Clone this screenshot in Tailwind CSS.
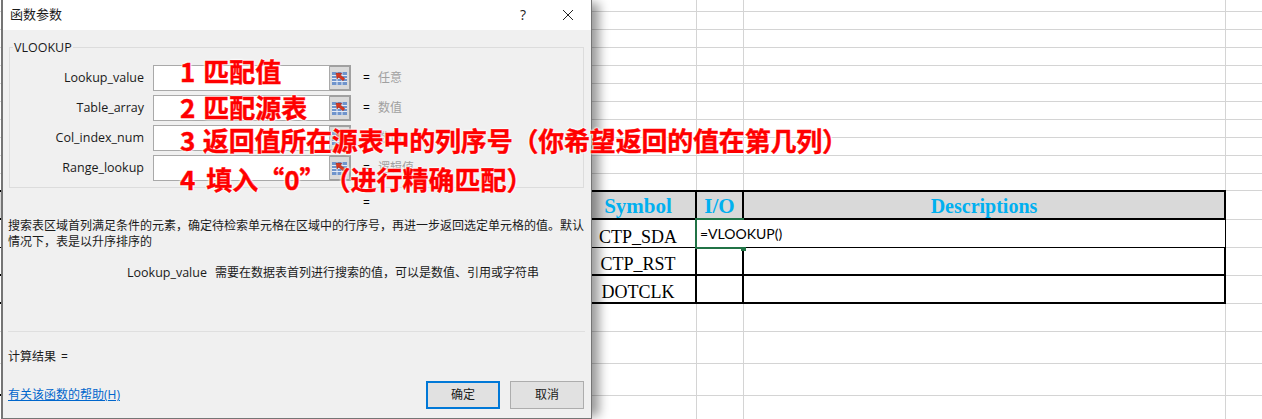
<!DOCTYPE html>
<html lang="zh-CN">
<head>
  <meta charset="UTF-8">
  <title>函数参数</title>
  <script src="https://cdn.jsdelivr.net/npm/@tailwindcss/browser@4"></script>
</head>
<body class="bg-white overflow-hidden">
  <div class="relative w-[1262px] h-[419px] overflow-hidden bg-white">

    <!-- sheet -->
    <div class="flex flex-col">
      <div class="grid grid-cols-[697px_47px_482px_1fr] h-[12px] border-b border-[#d4d4d4]"><div class="border-r border-[#d4d4d4]"></div><div class="border-r border-[#d4d4d4]"></div><div class="border-r border-[#d4d4d4]"></div></div>
      <div class="grid grid-cols-[697px_47px_482px_1fr] h-[18px] border-b border-[#d4d4d4]"><div class="border-r border-[#d4d4d4]"></div><div class="border-r border-[#d4d4d4]"></div><div class="border-r border-[#d4d4d4]"></div></div>
      <div class="grid grid-cols-[697px_47px_482px_1fr] h-[18px] border-b border-[#d4d4d4]"><div class="border-r border-[#d4d4d4]"></div><div class="border-r border-[#d4d4d4]"></div><div class="border-r border-[#d4d4d4]"></div></div>
      <div class="grid grid-cols-[697px_47px_482px_1fr] h-[18px] border-b border-[#d4d4d4]"><div class="border-r border-[#d4d4d4]"></div><div class="border-r border-[#d4d4d4]"></div><div class="border-r border-[#d4d4d4]"></div></div>
      <div class="grid grid-cols-[697px_47px_482px_1fr] h-[18px] border-b border-[#d4d4d4]"><div class="border-r border-[#d4d4d4]"></div><div class="border-r border-[#d4d4d4]"></div><div class="border-r border-[#d4d4d4]"></div></div>
      <div class="grid grid-cols-[697px_47px_482px_1fr] h-[18px] border-b border-[#d4d4d4]"><div class="border-r border-[#d4d4d4]"></div><div class="border-r border-[#d4d4d4]"></div><div class="border-r border-[#d4d4d4]"></div></div>
      <div class="grid grid-cols-[697px_47px_482px_1fr] h-[18px] border-b border-[#d4d4d4]"><div class="border-r border-[#d4d4d4]"></div><div class="border-r border-[#d4d4d4]"></div><div class="border-r border-[#d4d4d4]"></div></div>
      <div class="grid grid-cols-[697px_47px_482px_1fr] h-[18px] border-b border-[#d4d4d4]"><div class="border-r border-[#d4d4d4]"></div><div class="border-r border-[#d4d4d4]"></div><div class="border-r border-[#d4d4d4]"></div></div>
      <div class="grid grid-cols-[697px_47px_482px_1fr] h-[18px] border-b border-[#d4d4d4]"><div class="border-r border-[#d4d4d4]"></div><div class="border-r border-[#d4d4d4]"></div><div class="border-r border-[#d4d4d4]"></div></div>
      <div class="grid grid-cols-[697px_47px_482px_1fr] h-[18px] border-b border-[#d4d4d4]"><div class="border-r border-[#d4d4d4]"></div><div class="border-r border-[#d4d4d4]"></div><div class="border-r border-[#d4d4d4]"></div></div>
      <div class="grid grid-cols-[697px_47px_482px_1fr] h-[16px]"><div class="border-r border-[#d4d4d4]"></div><div class="border-r border-[#d4d4d4]"></div><div class="border-r border-[#d4d4d4]"></div></div>

      <!-- table -->
      <div class="grid grid-cols-[697px_47px_482px_1fr] h-[30px] leading-none font-['Liberation_Serif',serif] text-[21px] font-bold text-[#00b0f0]">
        <div class="bg-[#d9d9d9] border-y-2 border-r-2 border-black pl-[581px] pt-[2px] flex items-center"><span class="w-[116px] text-center">Symbol</span></div>
        <div class="bg-[#d9d9d9] border-y-2 border-r-2 border-black pt-[2px] flex items-center justify-center">I/O</div>
        <div class="bg-[#d9d9d9] border-y-2 border-r-2 border-black pt-[2px] flex items-center justify-center text-[20px]">Descriptions</div>
        <div class="border-b border-t border-[#d4d4d4]"></div>
      </div>
      <div class="grid grid-cols-[697px_47px_482px_1fr] h-[28px] leading-none font-['Liberation_Serif',serif] text-[18px] text-black">
        <div class="border-b border-r-2 border-black pl-[581px] pt-[6px] flex items-center"><span class="w-[116px] text-center">CTP_SDA</span></div>
        <div class="border-b border-black flex items-center pl-[3px] whitespace-nowrap font-['Lato',sans-serif] text-[14px]">=VLOOKUP()</div>
        <div class="border-b border-r border-black"></div>
        <div class="border-b border-[#d4d4d4]"></div>
      </div>
      <div class="grid grid-cols-[697px_47px_482px_1fr] h-[28px] leading-none font-['Liberation_Serif',serif] text-[18px] text-black">
        <div class="border-b-2 border-r-2 border-black pl-[581px] pt-[6px] flex items-center"><span class="w-[116px] text-center">CTP_RST</span></div>
        <div class="border-b-2 border-r-2 border-black"></div>
        <div class="border-b-2 border-r-2 border-black"></div>
        <div class="border-b border-[#d4d4d4]"></div>
      </div>
      <div class="grid grid-cols-[697px_47px_482px_1fr] h-[28px] leading-none font-['Liberation_Serif',serif] text-[18px] text-black">
        <div class="border-b-2 border-r-2 border-black pl-[581px] pt-[6px] flex items-center"><span class="w-[116px] text-center">DOTCLK</span></div>
        <div class="border-b-2 border-r-2 border-black"></div>
        <div class="border-b-2 border-r-2 border-black"></div>
        <div class="border-b border-[#d4d4d4]"></div>
      </div>

      <div class="grid grid-cols-[697px_47px_482px_1fr] h-[28px] border-b border-[#d4d4d4]"><div class="border-r border-[#d4d4d4]"></div><div class="border-r border-[#d4d4d4]"></div><div class="border-r border-[#d4d4d4]"></div></div>
      <div class="grid grid-cols-[697px_47px_482px_1fr] h-[32px] border-b border-[#d4d4d4]"><div class="border-r border-[#d4d4d4]"></div><div class="border-r border-[#d4d4d4]"></div><div class="border-r border-[#d4d4d4]"></div></div>
      <div class="grid grid-cols-[697px_47px_482px_1fr] h-[32px] border-b border-[#d4d4d4]"><div class="border-r border-[#d4d4d4]"></div><div class="border-r border-[#d4d4d4]"></div><div class="border-r border-[#d4d4d4]"></div></div>
      <div class="grid grid-cols-[697px_47px_482px_1fr] h-[32px]"><div class="border-r border-[#d4d4d4]"></div><div class="border-r border-[#d4d4d4]"></div><div class="border-r border-[#d4d4d4]"></div></div>
    </div>

    <!-- selected cell -->
    <div class="absolute left-[695px] top-[218px] w-[49px] h-[31px] border-l-2 border-y-2 border-[#217346]"></div>
    <div class="absolute left-[741px] top-[247px] w-[5px] h-[4px] bg-[#217346]"></div>

    <div class="absolute left-0 top-[394px] w-[2px] h-[2px] bg-black"></div>

    <!-- dialog -->
    <div class="absolute left-[1px] top-0 w-[591px] h-[419px] flex flex-col bg-[#f0f0f0] border-l-2 border-r border-b border-[#757575] shadow-[10px_0_10px_-3px_rgba(0,0,0,0.4)] font-['Open_Sans','Noto_Sans_CJK_SC',sans-serif] text-[12px] text-[#1a1a1a]">
      <div class="h-[30px] shrink-0 bg-white flex items-center pl-[7px] text-[13px]">
        <span>函数参数</span>
        <span class="ml-auto mr-[5px] text-[14px] leading-none">?</span>
        <svg class="ml-[31px] mr-[17px]" width="12" height="12" viewBox="0 0 12 12" fill="none" stroke="#222" stroke-width="1"><path d="M1 1l10 10M11 1L1 11"/></svg>
      </div>

      <div class="relative mt-[17px] ml-[6px] w-[575px] h-[141px] shrink-0 border border-[#dcdcdc] pt-[17px] flex flex-col gap-[4px]">
        <span class="absolute left-[3px] top-[-8px] bg-[#f0f0f0] px-[1px] leading-[16px] text-[12.5px]">VLOOKUP</span>

        <div class="flex items-center h-[26px]">
          <span class="w-[134px] text-right text-[12.5px]">Lookup_value</span>
          <div class="ml-[9px] w-[177px] h-[26px] bg-white border border-[#a9a9a9]"></div>
          <div class="w-[21px] h-[26px] bg-[#dadada] border-2 border-l-0 border-[#a0a0a0] flex items-center justify-center">
            <svg width="15" height="13" viewBox="0 0 15 13"><rect width="15" height="13" fill="#6f94cc"/><path d="M0 3.5h15M0 6.5h15M0 9.5h15M5 0v13M10 0v13" stroke="#e4ebf6"/><path d="M4 1l6 .3-1.6 1.7 4.4 3.6-1.8 2.2L6.6 5.2 5 7z" fill="#d8361f" stroke="#8e1c10" stroke-width=".4"/></svg>
          </div>
          <span class="ml-[12px] text-black">=</span>
          <span class="ml-[8px] text-[#a0a0a0]">任意</span>
        </div>
        <div class="flex items-center h-[26px]">
          <span class="w-[134px] text-right text-[12.5px]">Table_array</span>
          <div class="ml-[9px] w-[177px] h-[26px] bg-white border border-[#a9a9a9]"></div>
          <div class="w-[21px] h-[26px] bg-[#dadada] border-2 border-l-0 border-[#a0a0a0] flex items-center justify-center">
            <svg width="15" height="13" viewBox="0 0 15 13"><rect width="15" height="13" fill="#6f94cc"/><path d="M0 3.5h15M0 6.5h15M0 9.5h15M5 0v13M10 0v13" stroke="#e4ebf6"/><path d="M4 1l6 .3-1.6 1.7 4.4 3.6-1.8 2.2L6.6 5.2 5 7z" fill="#d8361f" stroke="#8e1c10" stroke-width=".4"/></svg>
          </div>
          <span class="ml-[12px] text-black">=</span>
          <span class="ml-[8px] text-[#a0a0a0]">数值</span>
        </div>
        <div class="flex items-center h-[26px]">
          <span class="w-[134px] text-right text-[12.5px]">Col_index_num</span>
          <div class="ml-[9px] w-[177px] h-[26px] bg-white border border-[#a9a9a9]"></div>
          <div class="w-[21px] h-[26px] bg-[#dadada] border-2 border-l-0 border-[#a0a0a0] flex items-center justify-center">
            <svg width="15" height="13" viewBox="0 0 15 13"><rect width="15" height="13" fill="#6f94cc"/><path d="M0 3.5h15M0 6.5h15M0 9.5h15M5 0v13M10 0v13" stroke="#e4ebf6"/><path d="M4 1l6 .3-1.6 1.7 4.4 3.6-1.8 2.2L6.6 5.2 5 7z" fill="#d8361f" stroke="#8e1c10" stroke-width=".4"/></svg>
          </div>
          <span class="ml-[12px] text-black">=</span>
          <span class="ml-[8px] text-[#a0a0a0]">数值</span>
        </div>
        <div class="flex items-center h-[26px]">
          <span class="w-[134px] text-right text-[12.5px]">Range_lookup</span>
          <div class="ml-[9px] w-[177px] h-[26px] bg-white border border-[#a9a9a9]"></div>
          <div class="w-[21px] h-[26px] bg-[#dadada] border-2 border-l-0 border-[#a0a0a0] flex items-center justify-center">
            <svg width="15" height="13" viewBox="0 0 15 13"><rect width="15" height="13" fill="#6f94cc"/><path d="M0 3.5h15M0 6.5h15M0 9.5h15M5 0v13M10 0v13" stroke="#e4ebf6"/><path d="M4 1l6 .3-1.6 1.7 4.4 3.6-1.8 2.2L6.6 5.2 5 7z" fill="#d8361f" stroke="#8e1c10" stroke-width=".4"/></svg>
          </div>
          <span class="ml-[12px] text-black">=</span>
          <span class="ml-[8px] text-[#a0a0a0]">逻辑值</span>
        </div>
      </div>

      <div class="h-[16px] mt-[7px] ml-[360px] leading-[16px] text-black">=</div>

      <p class="mt-[-1px] mx-[5px] w-[578px] leading-[16px] pt-[8px]">搜索表区域首列满足条件的元素，确定待检索单元格在区域中的行序号，再进一步返回选定单元格的值。默认情况下，表是以升序排序的</p>

      <div class="flex mt-[15px] ml-[124px] leading-[16px]">
        <span class="w-[88px] text-[12.5px]">Lookup_value</span>
        <span>需要在数据表首列进行搜索的值，可以是数值、引用或字符串</span>
      </div>

      <div class="mt-[50px] mx-[5px] h-px w-[577px] bg-[#dfdfdf]"></div>

      <div class="mt-[17px] ml-[5px] leading-[16px]">计算结果<span class="ml-[5px]">=</span></div>

      <div class="mt-[16px] ml-[5px] mr-[7px] flex items-center">
        <a class="text-[#0066cc] underline">有关该函数的帮助(H)</a>
        <div class="ml-auto w-[74px] h-[28px] bg-[#e1e1e1] border-2 border-[#0078d7] flex items-center justify-center">确定</div>
        <div class="ml-[10px] w-[74px] h-[28px] bg-[#e1e1e1] border border-[#adadad] flex items-center justify-center">取消</div>
      </div>
    </div>

    <!-- annotations -->
    <div class="absolute left-[180px] top-[58px] whitespace-pre leading-[26px] text-[26px] font-bold text-[#ff0000] font-['Noto_Sans_CJK_SC',sans-serif] [word-spacing:2px] [-webkit-text-stroke:0.4px_#ff0000] [text-shadow:0_0_2px_#fff,0_0_2px_#fff,0_0_3px_#fff,0_0_3px_#fff]">1 匹配值</div>
    <div class="absolute left-[180px] top-[94px] whitespace-pre leading-[26px] text-[26px] font-bold text-[#ff0000] font-['Noto_Sans_CJK_SC',sans-serif] [word-spacing:2px] [-webkit-text-stroke:0.4px_#ff0000] [text-shadow:0_0_2px_#fff,0_0_2px_#fff,0_0_3px_#fff,0_0_3px_#fff]">2 匹配源表</div>
    <div class="absolute left-[180px] top-[127px] whitespace-pre leading-[26px] text-[26px] tracking-[-0.2px] font-bold text-[#ff0000] font-['Noto_Sans_CJK_SC',sans-serif] [word-spacing:2px] [-webkit-text-stroke:0.4px_#ff0000] [text-shadow:0_0_2px_#fff,0_0_2px_#fff,0_0_3px_#fff,0_0_3px_#fff]">3 返回值所在源表中的列序号（你希望返回的值在第几列）</div>
    <div class="absolute left-[180px] top-[166px] whitespace-pre leading-[26px] text-[26px] font-bold text-[#ff0000] font-['Noto_Sans_CJK_SC',sans-serif] [word-spacing:5px] [-webkit-text-stroke:0.4px_#ff0000] [text-shadow:0_0_2px_#fff,0_0_2px_#fff,0_0_3px_#fff,0_0_3px_#fff]">4 填入“0”<span class="ml-[12px]">（进行精确匹配）</span></div>
  </div>
</body>
</html>
